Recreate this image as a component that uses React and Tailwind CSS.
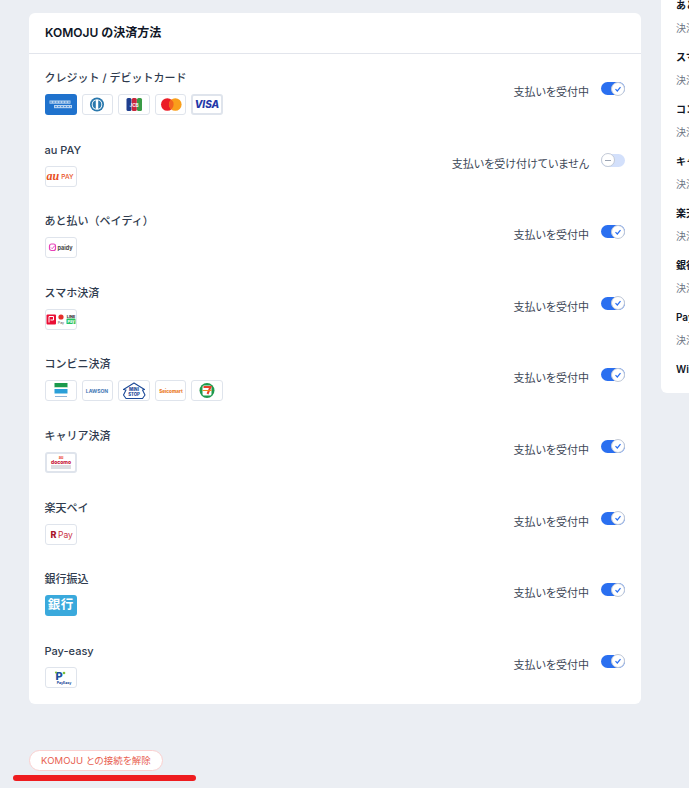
const F = { fontFamily: '"Inter","Noto Sans CJK JP",sans-serif' };

function Logo({ children, className = "" }) {
  return (
    <div className={`w-[31.6px] h-[21px] rounded-[3px] border border-[#dfe4ec] bg-white flex items-center justify-center overflow-hidden shrink-0 ${className}`}>
      <svg width="30" height="19" viewBox="0 0 30 19" className="shrink-0">{children}</svg>
    </div>
  );
}
const T = (p) => <text fontFamily="Inter, sans-serif" textAnchor="middle" {...p} />;

const Amex = () => (
  <div className="w-[31.6px] h-[21px] rounded-[3px] bg-[#1f72cd] flex items-center justify-center shrink-0">
    <svg width="30" height="19" viewBox="0 0 30 19">
      <rect x="3.5" y="5.5" width="21" height="3.2" fill="#b8d3f0" />
      <rect x="8" y="10" width="18" height="3.2" fill="#b8d3f0" />
      <path d="M4 7.1h20M9 11.6h16" stroke="#4a8dd6" strokeWidth="1" strokeDasharray="2 1" />
    </svg>
  </div>
);
const Diners = () => (
  <Logo>
    <circle cx="15" cy="9.5" r="7" fill="#2a78ad" />
    <circle cx="15" cy="9.5" r="5.3" fill="#fff" />
    <path d="M13.8 5.2a4.5 4.5 0 0 0 0 8.6zM16.2 5.2a4.5 4.5 0 0 1 0 8.6z" fill="#2a78ad" />
  </Logo>
);
const Jcb = () => (
  <Logo>
    <rect x="7.5" y="3" width="5" height="13" rx="1.5" fill="#1f3f8f" />
    <rect x="12.8" y="3" width="5" height="13" rx="1.5" fill="#c8263c" />
    <rect x="18" y="3" width="5" height="13" rx="1.5" fill="#3a9b46" />
    <T x="15" y="11.5" fontSize="4.5" fontWeight="700" fill="#fff">JCB</T>
  </Logo>
);
const Master = () => (
  <Logo>
    <circle cx="11.3" cy="9.5" r="6.3" fill="#eb1c26" />
    <circle cx="19.3" cy="9.5" r="6.3" fill="#f99f1b" />
    <path d="M15.3 4.6a6.3 6.3 0 0 1 0 9.8 6.3 6.3 0 0 1 0-9.8z" fill="#f2641f" />
  </Logo>
);
const Visa = () => (
  <Logo className="border-2">
    <T x="15" y="13" fontSize="10" fontWeight="800" fontStyle="italic" fill="#2438a8">VISA</T>
  </Logo>
);
const AuPay = () => (
  <Logo>
    <text x="0.5" y="12.5" fontFamily="Liberation Serif, serif" fontStyle="italic" fontWeight="700" fontSize="12" fill="#e8501e">au</text>
    <T x="21.5" y="12" fontSize="6.5" fontWeight="500" fill="#e8501e">PAY</T>
  </Logo>
);
const Paidy = () => (
  <Logo>
    <rect x="3.5" y="6" width="6" height="6.5" rx="2" fill="none" stroke="#e642b8" strokeWidth="1.2" />
    <path d="M5 9.5l1.2 1.2 2.5-3" stroke="#e642b8" strokeWidth=".9" fill="none" />
    <T x="19" y="11.5" fontSize="5.5" fontWeight="700" fill="#444">paidy</T>
  </Logo>
);
const Phones = () => (
  <Logo>
    <rect x="0.5" y="4.5" width="9.5" height="10" rx="1" fill="#ea0f36" />
    <path d="M3 6.5h4.5v3.5H4.5M3 6.5v6" stroke="#fff" strokeWidth="1" fill="none" />
    <circle cx="15" cy="7" r="2.6" fill="#e52f2a" />
    <T x="15" y="14" fontSize="3.6" fill="#555">Pay</T>
    <T x="25" y="7.5" fontSize="3.8" fontWeight="800" fill="#333">LINE</T>
    <rect x="20.5" y="8.5" width="9" height="5.5" rx=".5" fill="#27c35f" />
    <T x="25" y="12.6" fontSize="3.8" fontWeight="700" fill="#fff">Pay</T>
  </Logo>
);
const Family = () => (
  <Logo>
    <rect x="8.5" y="2" width="13" height="4.5" fill="#1b9a4c" />
    <rect x="8.5" y="6.5" width="13" height="1.3" fill="#fff" />
    <rect x="8.5" y="8" width="13" height="4.5" fill="#2a9fd8" />
    <rect x="9" y="15" width="12" height="1" fill="#8db4d8" />
  </Logo>
);
const Lawson = () => (
  <Logo>
    <T x="15" y="11.5" fontSize="5" fontWeight="700" fill="#4477b5">LAWSON</T>
  </Logo>
);
const Ministop = () => (
  <Logo>
    <path d="M4.5 8.5L15 2l10.5 6.5-2 .5 2.5 5-2.5 3.5H7L4.5 14 7 9z" fill="#fff" stroke="#1d4a98" strokeWidth="1.1" strokeLinejoin="round" />
    <T x="15" y="10" fontSize="4.3" fontWeight="800" fill="#1d4a98">MINI</T>
    <T x="15" y="15" fontSize="4.3" fontWeight="800" fill="#1d4a98">STOP</T>
  </Logo>
);
const Seico = () => (
  <Logo>
    <T x="15" y="11.5" fontSize="4.6" fontWeight="800" fill="#ea7a1f">Seicomart</T>
  </Logo>
);
const Seven = () => (
  <Logo>
    <circle cx="15" cy="9.5" r="7.5" fill="#1f9a4d" />
    <rect x="10.5" y="4.5" width="9" height="10" rx="1.5" fill="#fff" />
    <path d="M11.5 6h7l-3 7" stroke="#e8402a" strokeWidth="2" fill="none" />
    <rect x="10.5" y="9" width="9" height="1" fill="#f08a1e" />
  </Logo>
);
const Docomo = () => (
  <Logo className="border-2">
    <T x="15" y="6" fontSize="3.8" fontWeight="700" fill="#e8402a">au</T>
    <T x="15" y="10.5" fontSize="5" fontWeight="800" fill="#c8163a">docomo</T>
    <rect x="5" y="12.5" width="20" height="1" fill="#b9bec6" />
    <rect x="5" y="14.5" width="20" height="1" fill="#b9bec6" />
  </Logo>
);
const RPay = () => (
  <Logo>
    <text x="4.5" y="13" fontFamily="Inter, sans-serif" fontSize="9" fontWeight="800" fill="#a8162c">R</text>
    <text x="12" y="13" fontFamily="Inter, sans-serif" fontSize="8.5" fill="#c9303f">Pay</text>
  </Logo>
);
const Bank = () => (
  <div className="w-[31.6px] h-[21px] rounded-[3px] bg-[#3aa9dc] flex items-center justify-center shrink-0 text-white font-bold text-[12.5px] leading-none tracking-[0.5px] whitespace-nowrap" style={F}>銀行</div>
);
const PayEasy = () => (
  <Logo>
    <T x="13" y="12" fontSize="11" fontWeight="800" fill="#1d4f9c">P</T>
    <circle cx="18" cy="5" r="1.3" fill="#7bbf3a" />
    <circle cx="10" cy="4.5" r="1.1" fill="#7bbf3a" />
    <T x="18" y="16" fontSize="3.5" fontWeight="700" fill="#1d4f9c">PayEasy</T>
  </Logo>
);

const rows = [
  { t: "クレジット / デビットカード", l: [Amex, Diners, Jcb, Master, Visa] },
  { t: "au PAY", l: [AuPay], off: true },
  { t: "あと払い（ペイディ）", l: [Paidy] },
  { t: "スマホ決済", l: [Phones] },
  { t: "コンビニ決済", l: [Family, Lawson, Ministop, Seico, Seven] },
  { t: "キャリア決済", l: [Docomo] },
  { t: "楽天ペイ", l: [RPay] },
  { t: "銀行振込", l: [Bank] },
  { t: "Pay-easy", l: [PayEasy] },
];

function Toggle({ off }) {
  return (
    <div className={`w-6 h-[13px] rounded-full relative ${off ? "bg-[#d3e0fb]" : "bg-[#2a6ff0]"}`}>
      <div className={`absolute top-[-0.5px] w-[14px] h-[14px] rounded-full bg-white border border-[#c3cad6] flex items-center justify-center ${off ? "left-0" : "right-0"}`}>
        {off ? (
          <div className="w-[6px] h-px bg-[#9aa3b2]" />
        ) : (
          <svg width="8" height="8" viewBox="0 0 8 8"><path d="M1.5 4.2l1.8 1.8 3.2-3.8" stroke="#2a6ff0" strokeWidth="1.2" fill="none" /></svg>
        )}
      </div>
    </div>
  );
}

function Row({ t, l: logos, off }) {
  return (
    <div className="h-[71.6px] flex justify-between pl-4 pr-4 pt-[16px]">
      <div className="flex flex-col">
        <div className="text-[11px] leading-[16px] font-medium text-[#2f3b4e] -ml-[0.5px]">{t}</div>
        <div className="flex gap-[5px] mt-[8px]">
          {logos.map((C, i) => <C key={i} />)}
        </div>
      </div>
      <div className="flex items-start gap-3 pt-[13px]">
        <span className="text-[11px] leading-4 text-[#3c4757] mt-[1px] [font-feature-settings:'palt']">{off ? "支払いを受け付けていません" : "支払いを受付中"}</span>
        <div className="-mt-[1px]"><Toggle off={off} /></div>
      </div>
    </div>
  );
}

const side = [
  ["あと払い（ペイディ）", 1], ["スマホ決済", 1], ["コンビニ決済", 1], ["キャリア決済", 1],
  ["楽天ペイ", 1], ["銀行振込", 1], ["Pay-easy", 1], ["Wire", 0],
];

export default function App() {
  return (
    <div className="w-[689px] h-[788px] overflow-hidden bg-[#ebeef3] flex items-start pl-[29px]" style={F}>
      <div className="w-[612px] shrink-0 pt-[13px]">
        <div className="bg-white rounded-[6px] pb-[6px]">
          <div className="h-[41px] border-b border-[#e2e5ec] pl-4 flex items-center text-[12px] font-semibold text-[#0f1626] [font-feature-settings:'palt']">KOMOJU の決済方法</div>
          <div>
            {rows.map((r) => <Row key={r.t} {...r} />)}
          </div>
        </div>
        <button className="mt-[46px] h-[21px] w-[134px] rounded-full bg-white border border-[#fbd0cf] text-[9.5px] tracking-[0.1px] text-[#e8604f] flex items-center justify-center [font-feature-settings:'palt']">KOMOJU との接続を解除</button>
        <div className="mt-[4px] -ml-4 w-[183px] h-[6px] rounded-full bg-[#ee1c1f]" />
      </div>
      <div className="ml-5 w-[200px] shrink-0 h-[393px] bg-white rounded-bl-[6px] pl-[15px] overflow-hidden flex flex-col">
        {side.map(([t, d], i) => (
          <div key={t} className={`h-[52px] shrink-0 whitespace-nowrap ${i === 0 ? "-mt-[1px]" : ""}`}>
            <div className="text-[10px] leading-3 font-semibold text-[#0f1626]">{t}</div>
            {d ? <div className="mt-[11px] text-[10px] leading-3 text-[#6b7482]">決済方法を有効にする</div> : null}
          </div>
        ))}
      </div>
    </div>
  );
}
